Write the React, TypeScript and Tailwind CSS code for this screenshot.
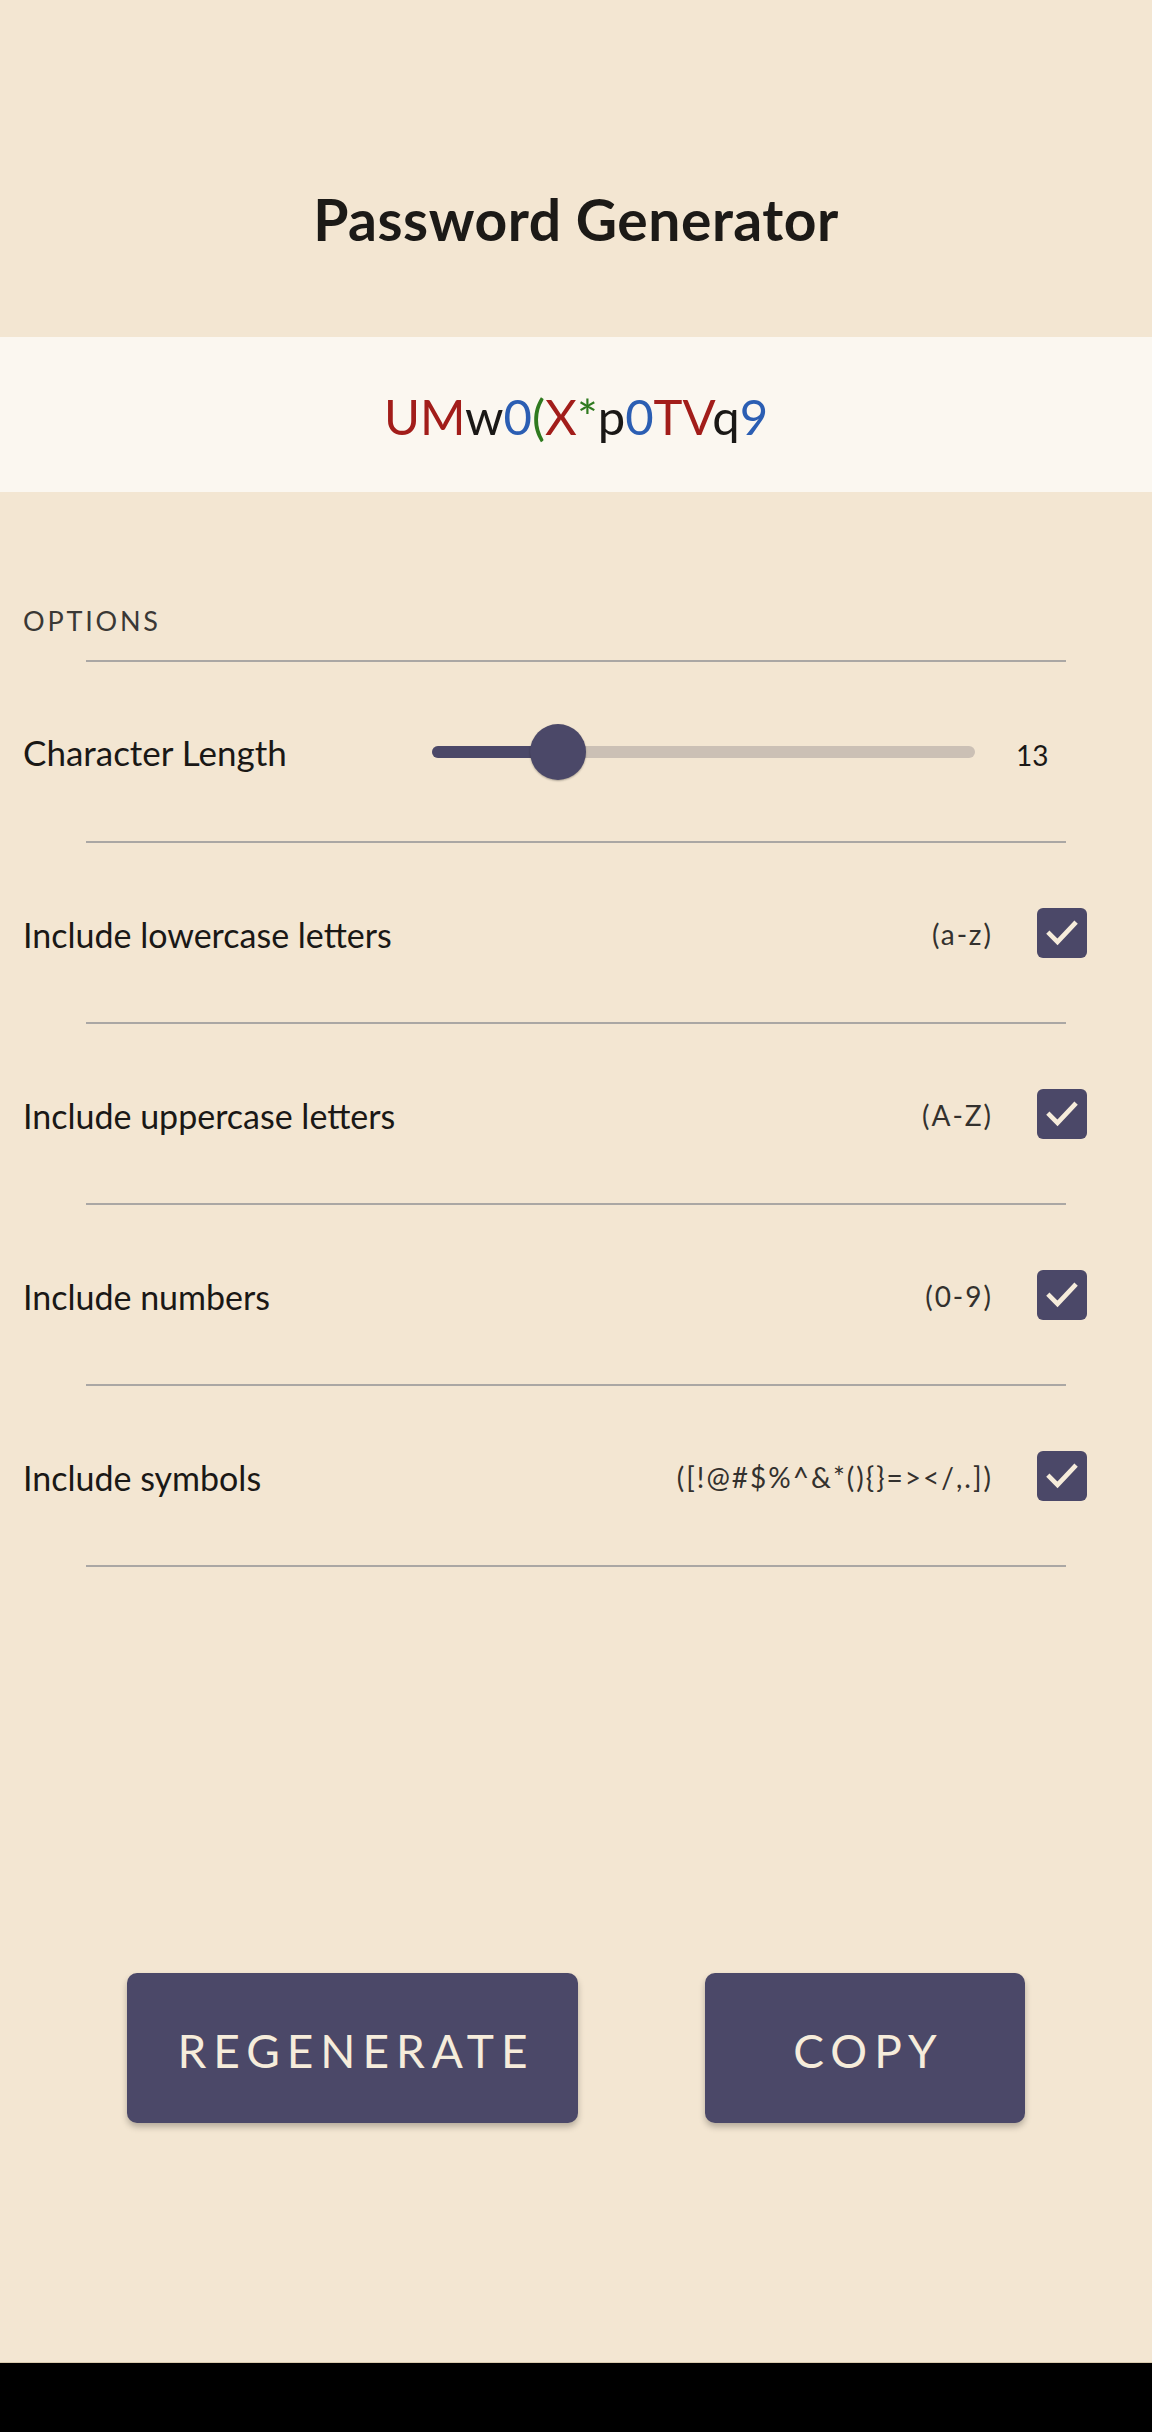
import { useState } from "react";

const FONT = { fontFamily: "Lato, 'Noto Sans', sans-serif" };

const PASSWORD = "UMw0(X*p0TVq9";

function charColor(c: string) {
  if (/[A-Z]/.test(c)) return "text-[#a21d1a]";
  if (/[a-z]/.test(c)) return "text-[#1a1816]";
  if (/[0-9]/.test(c)) return "text-[#2b5eb3]";
  return "text-[#2f7a1f]";
}

const OPTIONS = [
  { label: "Include lowercase letters", range: "(a-z)" },
  { label: "Include uppercase letters", range: "(A-Z)" },
  { label: "Include numbers", range: "(0-9)" },
  { label: "Include symbols", range: "([!@#$%^&*(){}=></,.])" },
];

function CheckBox() {
  return (
    <div className="w-[50px] h-[50px] rounded-[6px] bg-[#4b4868] flex items-center justify-center">
      <svg width="40" height="40" viewBox="0 0 24 24" fill="none">
        <path d="M4.5 12.5l4.8 4.8L19.5 6.5" stroke="#f6ecdb" strokeWidth="2.8" strokeLinecap="square" />
      </svg>
    </div>
  );
}

function Divider() {
  return <div className="mx-[86px] h-[2px] bg-[#aaa7a4]"></div>;
}

export default function App() {
  const [length] = useState(13);
  const pct = 23.2;

  return (
    <div className="w-[1152px] h-[2432px] bg-black flex flex-col" style={FONT}>
      <div className="h-[2363px] bg-[#f3e6d2] flex flex-col border-b border-[#d9c9ad]">
        {/* Header */}
        <div className="h-[337px] flex justify-center pt-[191px]">
          <h1 className="text-[57px] leading-none font-bold text-[#1c1a17] tracking-[0.5px]">Password Generator</h1>
        </div>

        {/* Password */}
        <div className="h-[155px] bg-[#fbf7f0] flex items-center justify-center pt-[4px]">
          <p className="text-[49px] leading-none">
            {PASSWORD.split("").map((c, i) => (
              <span key={i} className={charColor(c)}>{c}</span>
            ))}
          </p>
        </div>

        {/* Options */}
        <div className="pt-[115px]">
          <p className="px-[23px] text-[27px] leading-none tracking-[2.8px] text-[#3a3835] mb-[26px]">OPTIONS</p>
          <Divider />

          <div className="h-[179px] flex items-center px-[23px] pt-[2px]">
            <span className="w-[409px] text-[35px] text-[#1a1816]">Character Length</span>
            <div className="relative w-[543px] h-[12px] rounded-full bg-[#cbc0b5] -mt-[2px]">
              <div className="h-full rounded-full bg-[#4b4868]" style={{ width: `${pct}%` }}></div>
              <div
                className="absolute top-1/2 w-[56px] h-[56px] -translate-x-1/2 -translate-y-1/2 rounded-full bg-[#4b4868] shadow-[0_1px_2px_rgba(0,0,0,0.3)]"
                style={{ left: `${pct}%` }}
              ></div>
            </div>
            <span className="ml-[41px] text-[28px] text-[#1a1816] pt-[4px]">{length}</span>
          </div>
          <Divider />

          {OPTIONS.map((opt) => (
            <div key={opt.label}>
              <div className="h-[179px] flex items-center pl-[23px] pr-[65px]">
                <span className="flex-1 text-[34px] text-[#1a1816] pt-[3px]">{opt.label}</span>
                <span className="text-[28px] text-[#33312e] tracking-[2px] mr-[44px] pt-[3px]">{opt.range}</span>
                <CheckBox />
              </div>
              <Divider />
            </div>
          ))}
        </div>

        {/* Buttons */}
        <div className="mt-[406px] flex justify-between px-[127px]">
          <button className="w-[451px] h-[150px] rounded-[10px] bg-[#4b4868] text-[#f6ecdb] text-[46px] tracking-[7px] pl-[7px] pt-[4px] shadow-[0_4px_6px_rgba(0,0,0,0.25)]">
            REGENERATE
          </button>
          <button className="w-[320px] h-[150px] rounded-[10px] bg-[#4b4868] text-[#f6ecdb] text-[46px] tracking-[7px] pl-[7px] pt-[4px] shadow-[0_4px_6px_rgba(0,0,0,0.25)]">
            COPY
          </button>
        </div>
      </div>
    </div>
  );
}
